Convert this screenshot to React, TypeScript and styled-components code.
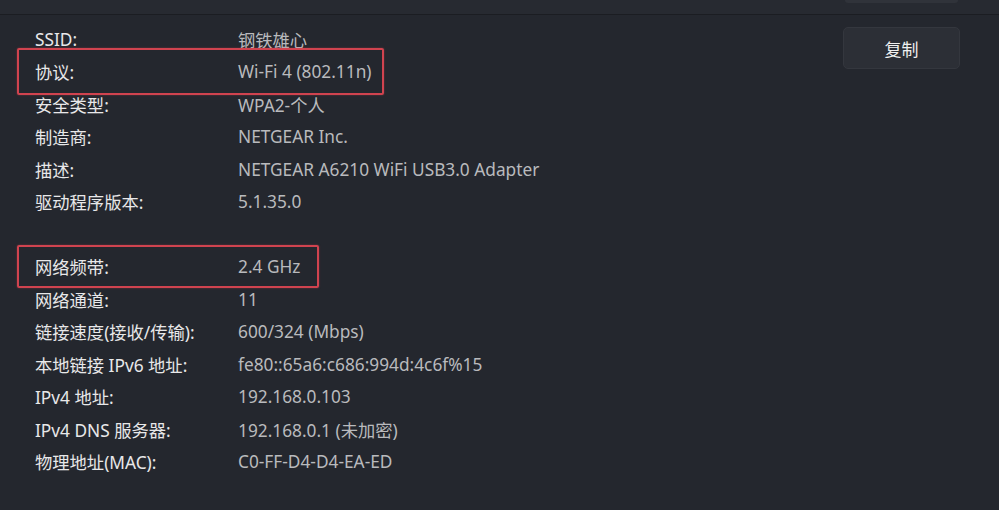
import styled, { createGlobalStyle } from "styled-components";

const GlobalStyle = createGlobalStyle`
  html, body {
    margin: 0;
    padding: 0;
    background: #24272e;
  }
  body {
    font-family: "Noto Sans", "Noto Sans CJK SC", sans-serif;
    overflow: hidden;
  }
`;

const Page = styled.div`
  width: 999px;
  height: 510px;
  background: #24272e;
  display: flex;
  flex-direction: column;
`;

const TopStrip = styled.div`
  height: 14px;
  background: #272a31;
  border-bottom: 1px solid #1b1d22;
  display: flex;
  justify-content: flex-end;
  padding-right: 41px;
`;

const TopButtonEdge = styled.div`
  width: 113px;
  height: 3px;
  background: #30333a;
  border-radius: 0 0 5px 5px;
`;

const Body = styled.div`
  display: flex;
  justify-content: space-between;
  padding: 8px 39px 0 35px;
`;

const List = styled.div`
  display: flex;
  flex-direction: column;
`;

const Row = styled.div`
  position: relative;
  display: grid;
  grid-template-columns: 203px auto;
  height: 32.5px;
  align-items: center;
  font-size: 17.3px;
`;

const Spacer = styled.div`
  height: 32.5px;
`;

const Label = styled.span`
  color: #e8e8e9;
  white-space: nowrap;
`;

const Value = styled.span`
  color: #b9babd;
  white-space: nowrap;
`;

const Highlight = styled.span<{ $w: number; $top: number; $h: number }>`
  position: absolute;
  left: -18px;
  top: ${(p) => p.$top}px;
  width: ${(p) => p.$w}px;
  height: ${(p) => p.$h}px;
  border: 2px solid #d0434f;
  border-radius: 2px;
  box-sizing: border-box;
  box-shadow: 0 0 2px rgba(208, 67, 79, 0.5);
  pointer-events: none;
`;

const CopyButton = styled.button`
  margin-top: 4px;
  width: 117px;
  height: 42px;
  background: #2c2f36;
  border: 1px solid #34373e;
  border-radius: 5px;
  color: #f0f0f0;
  font-family: "Noto Sans", "Noto Sans CJK SC", sans-serif;
  font-size: 17px;
  cursor: pointer;
`;

type Item = { label: string; value: string; box?: { w: number; top: number; h: number } } | null;

const items: Item[] = [
  { label: "SSID:", value: "钢铁雄心" },
  { label: "协议:", value: "Wi-Fi 4 (802.11n)", box: { w: 367, top: -8, h: 47 } },
  { label: "安全类型:", value: "WPA2-个人" },
  { label: "制造商:", value: "NETGEAR Inc." },
  { label: "描述:", value: "NETGEAR A6210 WiFi USB3.0 Adapter" },
  { label: "驱动程序版本:", value: "5.1.35.0" },
  null,
  { label: "网络频带:", value: "2.4 GHz", box: { w: 302, top: -6, h: 43 } },
  { label: "网络通道:", value: "11" },
  { label: "链接速度(接收/传输):", value: "600/324 (Mbps)" },
  { label: "本地链接 IPv6 地址:", value: "fe80::65a6:c686:994d:4c6f%15" },
  { label: "IPv4 地址:", value: "192.168.0.103" },
  { label: "IPv4 DNS 服务器:", value: "192.168.0.1 (未加密)" },
  { label: "物理地址(MAC):", value: "C0-FF-D4-D4-EA-ED" },
];

export default function App() {
  return (
    <>
      <GlobalStyle />
      <Page>
        <TopStrip>
          <TopButtonEdge />
        </TopStrip>
        <Body>
          <List>
            {items.map((it, i) =>
              it ? (
                <Row key={i}>
                  <Label>{it.label}</Label>
                  <Value>{it.value}</Value>
                  {it.box && <Highlight $w={it.box.w} $top={it.box.top} $h={it.box.h} />}
                </Row>
              ) : (
                <Spacer key={i} />
              )
            )}
          </List>
          <CopyButton>复制</CopyButton>
        </Body>
      </Page>
    </>
  );
}
